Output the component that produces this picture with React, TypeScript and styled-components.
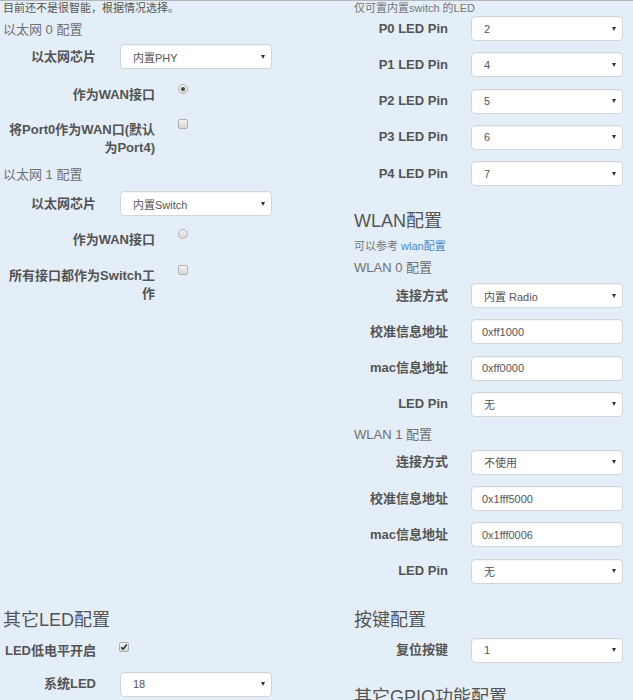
import React from "react";
import styled, { createGlobalStyle } from "styled-components";

const GlobalStyle = createGlobalStyle`
    html, body {
        margin: 0;
        padding: 0;
        background: #e4eef8;
    }
    body {
        font-family: "Liberation Sans", "Noto Sans CJK SC", sans-serif;
        color: #555;
        overflow: hidden;
    }
`;

const Page = styled.div`
    width: 633px;
    height: 700px;
    border-top: 1px solid #b4b8bc;
    box-sizing: border-box;
    background: #e4eef8;
`;

const Band = styled.div<{ $top?: number }>`
    display: grid;
    grid-template-columns: 354px 1fr;
    margin-top: ${(p) => p.$top || 0}px;
`;

const Column = styled.div<{ $left?: boolean }>`
    display: flex;
    flex-direction: column;
    padding-left: ${(p) => (p.$left ? 3 : 0)}px;
`;

const Note = styled.div<{ $top?: number; $dark?: boolean }>`
    font-size: 11px;
    line-height: 14px;
    color: ${(p) => (p.$dark ? "#555" : "#777")};
    margin-top: ${(p) => p.$top || 0}px;
    white-space: nowrap;
`;

const SubHead = styled.div<{ $top?: number }>`
    font-size: 13px;
    line-height: 18px;
    color: #707070;
    margin-top: ${(p) => p.$top || 0}px;
`;

const Heading = styled.h3<{ $top?: number }>`
    font-size: 18px;
    line-height: 22px;
    font-weight: normal;
    color: #555;
    margin: ${(p) => p.$top || 0}px 0 0 0;
    white-space: nowrap;
`;

const Link = styled.a`
    color: #428bca;
    text-decoration: none;
`;

const Row = styled.div<{ $label: number; $gap: number; $top?: number }>`
    display: grid;
    grid-template-columns: ${(p) => p.$label}px 152px;
    column-gap: ${(p) => p.$gap}px;
    align-items: center;
    margin-top: ${(p) => p.$top || 0}px;
`;

const CheckRow = styled.div<{ $label: number; $top?: number }>`
    display: grid;
    grid-template-columns: ${(p) => p.$label}px 1fr;
    column-gap: 23px;
    align-items: start;
    margin-top: ${(p) => p.$top || 0}px;
`;

const Label = styled.label<{ $pad?: number }>`
    font-size: 13px;
    line-height: 18px;
    font-weight: bold;
    color: #545454;
    text-align: right;
    padding-top: ${(p) => p.$pad || 0}px;
`;

const Control = styled.div`
    height: 25px;
    box-sizing: border-box;
    background: #fff;
    border: 1px solid #d2d6da;
    border-radius: 4px;
    box-shadow: inset 0 1px 1px rgba(0, 0, 0, 0.05);
    display: flex;
    align-items: center;
    justify-content: space-between;
    padding: 0 6px 0 10px;
    font-size: 11px;
    color: #555;
    white-space: nowrap;
`;

const SelectText = styled.span`
    padding-left: 2px;
`;

const Arrow = styled.span`
    width: 0;
    height: 0;
    border-left: 2.5px solid transparent;
    border-right: 2.5px solid transparent;
    border-top: 4px solid #333;
`;

const Radio = styled.span<{ $on?: boolean }>`
    display: flex;
    align-items: center;
    justify-content: center;
    width: 10px;
    height: 10px;
    margin-top: 4px;
    box-sizing: border-box;
    border-radius: 50%;
    border: 1px solid #b3b3b3;
    background: linear-gradient(#f4f4f4, #d8d8d8);
    &::after {
        content: "";
        display: ${(p) => (p.$on ? "block" : "none")};
        width: 4px;
        height: 4px;
        border-radius: 50%;
        background: #444;
    }
`;

const Box = styled.span<{ $top?: number }>`
    display: flex;
    align-items: center;
    justify-content: center;
    width: 10px;
    height: 10px;
    margin-top: ${(p) => p.$top ?? 4}px;
    box-sizing: border-box;
    border-radius: 2px;
    border: 1px solid #b0b0b0;
    background: linear-gradient(#f4f4f4, #d6d6d6);
`;

function Select({ value }: { value: string }) {
    return (
        <Control>
            <SelectText>{value}</SelectText>
            <Arrow />
        </Control>
    );
}

function Input({ value }: { value: string }) {
    return <Control>{value}</Control>;
}

function Check({ checked, top }: { checked?: boolean; top?: number }) {
    return (
        <Box $top={top}>
            {checked && (
                <svg width="8" height="8" viewBox="0 0 8 8">
                    <path d="M1.2 4.2 L3.1 6.1 L6.8 1.6" stroke="#333" strokeWidth="1.6" fill="none" />
                </svg>
            )}
        </Box>
    );
}

const ledPins = [
    ["P0 LED Pin", "2"],
    ["P1 LED Pin", "4"],
    ["P2 LED Pin", "5"],
    ["P3 LED Pin", "6"],
    ["P4 LED Pin", "7"],
];

function Wlan({ title, top, mode, cal, mac }: { title: string; top: number; mode: string; cal: string; mac: string }) {
    return (
        <>
            <SubHead $top={top}>{title}</SubHead>
            <Row $label={94} $gap={23} $top={6}>
                <Label>连接方式</Label>
                <Select value={mode} />
            </Row>
            <Row $label={94} $gap={23} $top={11.3}>
                <Label>校准信息地址</Label>
                <Input value={cal} />
            </Row>
            <Row $label={94} $gap={23} $top={11.3}>
                <Label>mac信息地址</Label>
                <Input value={mac} />
            </Row>
            <Row $label={94} $gap={23} $top={11.3}>
                <Label>LED Pin</Label>
                <Select value="无" />
            </Row>
        </>
    );
}

export default function App() {
    return (
        <Page>
            <GlobalStyle />
            <Band>
                <Column $left>
                    <Note $dark>目前还不是很智能，根据情况选择。</Note>
                    <SubHead $top={6}>以太网 0 配置</SubHead>
                    <Row $label={93} $gap={24} $top={5}>
                        <Label>以太网芯片</Label>
                        <Select value="内置PHY" />
                    </Row>
                    <CheckRow $label={152} $top={11}>
                        <Label $pad={6}>作为WAN接口</Label>
                        <Radio $on />
                    </CheckRow>
                    <CheckRow $label={152} $top={11}>
                        <Label $pad={6}>将Port0作为WAN口(默认为Port4)</Label>
                        <Check />
                    </CheckRow>
                    <SubHead $top={9}>以太网 1 配置</SubHead>
                    <Row $label={93} $gap={24} $top={7}>
                        <Label>以太网芯片</Label>
                        <Select value="内置Switch" />
                    </Row>
                    <CheckRow $label={152} $top={9}>
                        <Label $pad={6}>作为WAN接口</Label>
                        <Radio />
                    </CheckRow>
                    <CheckRow $label={152} $top={12}>
                        <Label $pad={6}>所有接口都作为Switch工作</Label>
                        <Check />
                    </CheckRow>
                </Column>
                <Column>
                    <Note>仅可置内置switch 的LED</Note>
                    {ledPins.map(([label, value], i) => (
                        <Row key={label} $label={94} $gap={23} $top={i === 0 ? 1 : 11.25}>
                            <Label>{label}</Label>
                            <Select value={value} />
                        </Row>
                    ))}
                    <Heading $top={24}>WLAN配置</Heading>
                    <Note $top={7}>
                        可以参考 <Link>wlan配置</Link>
                    </Note>
                    <Wlan title="WLAN 0 配置" top={6} mode="内置 Radio" cal="0xff1000" mac="0xff0000" />
                    <Wlan title="WLAN 1 配置" top={9} mode="不使用" cal="0x1fff5000" mac="0x1fff0006" />
                </Column>
            </Band>
            <Band $top={25}>
                <Column $left>
                    <Heading>其它LED配置</Heading>
                    <CheckRow $label={93} $top={5}>
                        <Label $pad={6}>LED低电平开启</Label>
                        <Check checked top={6} />
                    </CheckRow>
                    <Row $label={93} $gap={24} $top={12}>
                        <Label>系统LED</Label>
                        <Select value="18" />
                    </Row>
                </Column>
                <Column>
                    <Heading>按键配置</Heading>
                    <Row $label={94} $gap={23} $top={7}>
                        <Label>复位按键</Label>
                        <Select value="1" />
                    </Row>
                    <Heading $top={23}>其它GPIO功能配置</Heading>
                </Column>
            </Band>
        </Page>
    );
}
